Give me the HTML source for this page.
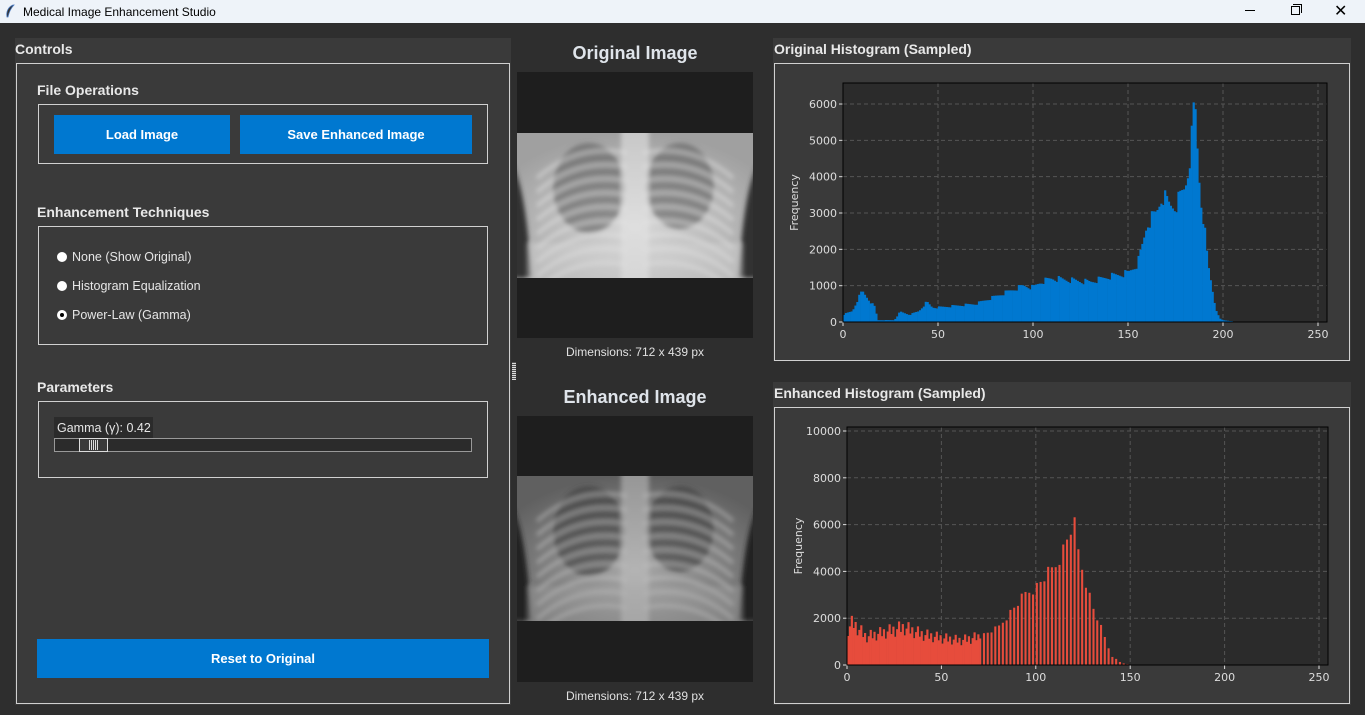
<!DOCTYPE html>
<html><head><meta charset="utf-8"><style>
*{margin:0;padding:0;box-sizing:border-box}
body{width:1365px;height:715px;background:#2e2e2e;font-family:"Liberation Sans",sans-serif;position:relative;overflow:hidden;color:#e6e6e6}
.a{position:absolute}
.tb{left:0;top:0;width:1365px;height:23px;background:#eef3f9;color:#000;font-size:12px}
.hdr{font-weight:bold;font-size:14px;color:#e8e8e8}
.fr{border:1px solid #d0d0d0}
.btn{background:#0078d0;color:#fff;font-weight:bold;font-size:13px;display:flex;align-items:center;justify-content:center}
.rad{font-size:12.5px;color:#e6e6e6}
.dot{position:absolute;width:10px;height:10px;border-radius:50%;background:#fff;left:-15px;top:2px}
.tick{font-size:11px;color:#ddd;font-family:"DejaVu Sans","Liberation Sans",sans-serif}
</style></head><body>
<div class="a tb">
<svg class="a" style="left:4px;top:4px" width="12" height="15" viewBox="0 0 12 15"><path d="M9 1 C4 3 2 8 3 13 L4 13 C5 8 7 4 10 1Z" fill="#333" stroke="#4a7ac0" stroke-width="0.8"/></svg>
<div class="a" style="left:23px;top:5px">Medical Image Enhancement Studio</div>
<div class="a" style="left:1245px;top:10px;width:10px;height:1px;background:#000"></div>
<div class="a" style="left:1291px;top:6px;width:9px;height:9px;border:1px solid #000"></div>
<div class="a" style="left:1293px;top:4px;width:9px;height:9px;border-top:1px solid #000;border-right:1px solid #000"></div>
<div class="a" style="left:1334px;top:1px;font-size:16px">✕</div>
</div>

<div class="a" style="left:15px;top:38px;width:496px;height:667px;background:#3a3a3a"></div>
<div class="a hdr" style="left:15px;top:41px">Controls</div>
<div class="a fr" style="left:16px;top:63px;width:494px;height:641px"></div>
<div class="a hdr" style="left:37px;top:82px">File Operations</div>
<div class="a fr" style="left:38px;top:104px;width:450px;height:60px"></div>
<div class="a btn" style="left:54px;top:115px;width:176px;height:39px">Load Image</div>
<div class="a btn" style="left:240px;top:115px;width:232px;height:39px">Save Enhanced Image</div>
<div class="a hdr" style="left:37px;top:204px">Enhancement Techniques</div>
<div class="a fr" style="left:38px;top:226px;width:450px;height:119px"></div>
<div class="a rad" style="left:72px;top:250px"><span class="dot"></span>None (Show Original)</div>
<div class="a rad" style="left:72px;top:279px"><span class="dot"></span>Histogram Equalization</div>
<div class="a rad" style="left:72px;top:308px"><span class="dot" style="border:3px solid #fff;background:#000"></span>Power-Law (Gamma)</div>
<div class="a hdr" style="left:37px;top:379px">Parameters</div>
<div class="a fr" style="left:38px;top:401px;width:450px;height:77px"></div>
<div class="a" style="left:54px;top:417px;width:99px;height:21px;background:#2b2b2b;font-size:12.5px;padding:4px 0 0 3px">Gamma (γ): 0.42</div>
<div class="a" style="left:54px;top:438px;width:418px;height:14px;background:#2b2b2b;border:1px solid #999"></div>
<div class="a" style="left:79px;top:438px;width:29px;height:14px;background:#3a3a3a;border:1px solid #ddd"></div>
<div class="a" style="left:89px;top:440px;width:9px;height:10px;background:repeating-linear-gradient(90deg,#ddd 0 1px,transparent 1px 2px)"></div>
<div class="a btn" style="left:37px;top:639px;width:452px;height:39px">Reset to Original</div>
<div class="a" style="left:512px;top:362px;width:4px;height:18px;background:repeating-linear-gradient(0deg,#ddd 0 1px,#555 1px 2px)"></div>

<div class="a" style="left:517px;top:43px;width:236px;text-align:center;font-weight:bold;font-size:18px;color:#dfe4ea">Original Image</div>
<div class="a" style="left:517px;top:72px;width:236px;height:266px;background:#1e1e1e"></div>
<svg class="a" style="left:517px;top:133px" width="236" height="145" viewBox="0 0 236 145" id="x1"></svg>
<div class="a" style="left:517px;top:345px;width:236px;text-align:center;font-size:12px;color:#e0e0e0">Dimensions: 712 x 439 px</div>
<div class="a" style="left:517px;top:387px;width:236px;text-align:center;font-weight:bold;font-size:18px;color:#dfe4ea">Enhanced Image</div>
<div class="a" style="left:517px;top:416px;width:236px;height:266px;background:#1e1e1e"></div>
<svg class="a" style="left:517px;top:476px" width="236" height="145" viewBox="0 0 236 145" id="x2"></svg>
<div class="a" style="left:517px;top:689px;width:236px;text-align:center;font-size:12px;color:#e0e0e0">Dimensions: 712 x 439 px</div>

<div class="a" style="left:773px;top:38px;width:578px;height:323px;background:#3a3a3a"></div>
<div class="a hdr" style="left:774px;top:41px">Original Histogram (Sampled)</div>
<div class="a fr" style="left:774px;top:63px;width:576px;height:298px"></div>
<div class="a" style="left:773px;top:382px;width:578px;height:323px;background:#3a3a3a"></div>
<div class="a hdr" style="left:774px;top:385px">Enhanced Histogram (Sampled)</div>
<div class="a fr" style="left:774px;top:407px;width:576px;height:297px"></div>
<svg class="a" style="left:0;top:0" width="1365" height="715" id="h"></svg>

<script>
function xray(id,dark){
 var s=document.getElementById(id),o='';
 o+='<defs><filter id="f'+id+'" x="-10%" y="-10%" width="120%" height="120%"><feGaussianBlur stdDeviation="2.5"/></filter><radialGradient id="g'+id+'" cx="50%" cy="65%" r="65%"><stop offset="0" stop-color="'+(dark?'#a8a8a8':'#d8d8d8')+'"/><stop offset="1" stop-color="'+(dark?'#606060':'#a0a0a0')+'"/></radialGradient><clipPath id="c'+id+'"><rect width="236" height="145"/></clipPath></defs>';
 o+='<g clip-path="url(#c'+id+')"><rect width="236" height="145" fill="url(#g'+id+')"/><g filter="url(#f'+id+')">';
 o+='<path d="M-5 30 Q10 60 14 145 L-5 145Z" fill="'+(dark?'#222':'#333')+'"/><path d="M241 30 Q226 60 222 145 L241 145Z" fill="'+(dark?'#222':'#333')+'"/>';
 var lung=dark?'#3a3a3a':'#5e5e5e';
 o+='<ellipse cx="72" cy="55" rx="36" ry="45" fill="'+lung+'" opacity="0.6"/><ellipse cx="163" cy="53" rx="34" ry="43" fill="'+lung+'" opacity="0.6"/>';
 for(var i=0;i<9;i++){var y=15+i*14;o+='<path d="M20 '+(y+30)+' Q60 '+(y-5)+' 110 '+(y+5)+'" stroke="'+(dark?'#c8c8c8':'#e6e6e6')+'" stroke-width="4" fill="none" opacity="0.45"/><path d="M216 '+(y+30)+' Q176 '+(y-5)+' 126 '+(y+5)+'" stroke="'+(dark?'#c8c8c8':'#e6e6e6')+'" stroke-width="4" fill="none" opacity="0.45"/>';}
 o+='<rect x="104" y="-5" width="28" height="155" fill="'+(dark?'#bbb':'#e2e2e2')+'" opacity="0.6"/>';
 o+='<rect x="10" y="110" width="216" height="40" fill="'+(dark?'#aaa':'#ddd')+'" opacity="0.35"/>';
 o+='</g></g>';
 s.innerHTML=o;
}
xray('x1',false);xray('x2',true);
function interp(pts,v){for(var i=0;i<pts.length-1;i++){if(v>=pts[i][0]&&v<=pts[i+1][0]){var t=(v-pts[i][0])/(pts[i+1][0]-pts[i][0]);return pts[i][1]+t*(pts[i+1][1]-pts[i][1]);}}return 0;}
var P1=[[0,200],[5,300],[8,650],[10,850],[13,650],[16,450],[17,400],[18,50],[27,50],[30,280],[35,200],[40,300],[44,550],[47,400],[50,400],[60,450],[70,500],[80,700],[90,900],[95,1000],[100,950],[104,1100],[110,1200],[120,1150],[130,1100],[140,1250],[150,1350],[155,1600],[158,2200],[160,2700],[165,3000],[168,3500],[172,3200],[175,3200],[178,3500],[180,3700],[182,4300],[184,5300],[185,6250],[186,5200],[188,3500],[190,2700],[192,1600],[194,1000],[196,400],[198,100],[200,50],[205,20],[206,0]];
var P2=[[0,1500],[3,1800],[10,1200],[20,1400],[30,1600],[40,1300],[50,1150],[60,1050],[70,1200],[80,1600],[90,2600],[95,3100],[100,3300],[105,3800],[110,4200],[115,5000],[120,6200],[122,5000],[125,4000],[130,2500],[135,1500],[140,400],[145,100],[150,0]];
function plot(o){
 var s='',W=o.x1-o.x0,H=o.y1-o.y0;
 s+='<rect x="'+o.x0+'" y="'+o.y0+'" width="'+W+'" height="'+H+'" fill="#2b2b2b"/>';
 for(var v=0;v<=250;v+=50){var x=o.zx+v*o.sx;s+='<line x1="'+x+'" y1="'+o.y0+'" x2="'+x+'" y2="'+o.y1+'" stroke="#555" stroke-dasharray="4,3"/>';
  s+='<line x1="'+x+'" y1="'+o.y1+'" x2="'+x+'" y2="'+(o.y1+4)+'" stroke="#ddd"/><text x="'+x+'" y="'+(o.y1+16)+'" class="tick" text-anchor="middle" fill="#ddd">'+v+'</text>';}
 for(var c=0;c<=o.maxc;c+=o.step){var y=o.y1-c*o.sy;s+='<line x1="'+o.x0+'" y1="'+y+'" x2="'+o.x1+'" y2="'+y+'" stroke="#555" stroke-dasharray="4,3"/>';
  s+='<line x1="'+(o.x0-4)+'" y1="'+y+'" x2="'+o.x0+'" y2="'+y+'" stroke="#ddd"/><text x="'+(o.x0-6)+'" y="'+(y+4)+'" class="tick" text-anchor="end" fill="#ddd">'+c+'</text>';}
 for(var b=0;b<256;b++){var n=interp(o.p,b+0.5);if(o.comb&&b>=70&&b%2)continue;if(o.comb&&b<70)n*=(0.8+0.4*((b*7)%5)/4);else n*=(0.93+0.14*((b*13)%7)/6);
  if(n<=0)continue;var h=n*o.sy,x=o.zx+b*o.sx;s+='<rect x="'+x+'" y="'+(o.y1-h)+'" width="'+(o.sx+(o.comb&&b>=70?0.2:0.3))+'" height="'+h+'" fill="'+o.col+'"/>';}
 s+='<rect x="'+o.x0+'" y="'+o.y0+'" width="'+W+'" height="'+H+'" fill="none" stroke="#000"/>';
 s+='<text transform="translate('+(o.x0-45)+','+((o.y0+o.y1)/2)+') rotate(-90)" class="tick" text-anchor="middle" fill="#ddd">Frequency</text>';
 return s;
}
document.getElementById('h').innerHTML=
 plot({x0:843,x1:1327,y0:83,y1:322,zx:843,sx:1.9,sy:0.03633,maxc:6000,step:1000,p:P1,col:'#0078d0'})+
 plot({x0:847,x1:1328,y0:427,y1:665,zx:847,sx:1.888,sy:0.0234,maxc:10000,step:2000,p:P2,col:'#e74c3c',comb:true});
</script>
</body></html>
